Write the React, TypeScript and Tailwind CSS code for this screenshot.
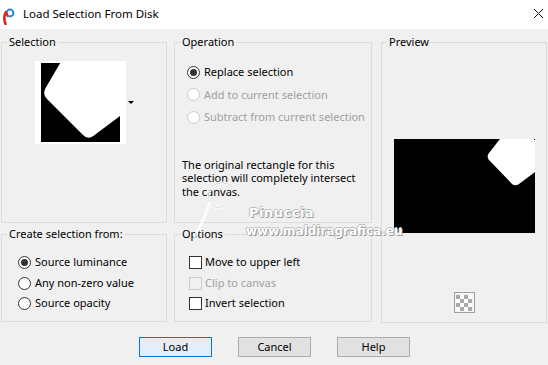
import type { ReactNode } from "react";

function Radio({ label, checked = false, disabled = false }: { label: string; checked?: boolean; disabled?: boolean }) {
  return (
    <div className="flex items-center gap-[4px] whitespace-nowrap">
      <span
        className={`flex items-center justify-center w-[13px] h-[13px] rounded-full border bg-white ${
          disabled ? "border-[#cccccc]" : "border-[#333333]"
        }`}
      >
        {checked && <span className="w-[7px] h-[7px] rounded-full bg-[#333333]" />}
      </span>
      <span className={disabled ? "text-[#a0a0a0]" : "text-black"}>{label}</span>
    </div>
  );
}

function Check({ label, disabled = false }: { label: string; disabled?: boolean }) {
  return (
    <div className="flex items-center gap-[3px] whitespace-nowrap">
      <span
        className={`w-[13px] h-[13px] border ${
          disabled ? "border-[#cccccc] bg-[#f0f0f0]" : "border-[#333333] bg-white"
        }`}
      />
      <span className={disabled ? "text-[#a0a0a0]" : "text-black"}>{label}</span>
    </div>
  );
}

function Group({ title, className = "", children }: { title: string; className?: string; children: ReactNode }) {
  return (
    <fieldset className={`border border-[#dcdcdc] ${className}`}>
      <legend className="ml-[5px] px-[2px] leading-[16px] whitespace-nowrap">{title}</legend>
      {children}
    </fieldset>
  );
}

export default function App() {
  return (
    <div className="relative w-[548px] h-[365px] overflow-hidden flex flex-col bg-[#f0f0f0] text-[11px] text-black font-['Noto_Sans','Liberation_Sans',sans-serif]">
      {/* Titelleiste */}
      <div className="h-[29px] bg-white flex items-center">
        <svg width={14} height={18} viewBox="0 0 14 18" className="ml-[2px] mt-[2px]" aria-hidden>
          <path d="M3.5 17 C2 13 2 8 4 5" stroke="#e2231a" strokeWidth={2.6} fill="none" strokeLinecap="round" />
          <circle cx={8} cy={6} r={3.4} stroke="#1e88e5" strokeWidth={2} fill="none" />
          <path d="M4 5 L5.5 9" stroke="#e2231a" strokeWidth={2} strokeLinecap="round" />
        </svg>
        <span className="ml-[7px] text-[11.5px] leading-[16px] mb-[2px]">Load Selection From Disk</span>
        <svg width={11} height={11} viewBox="0 0 11 11" className="ml-auto mr-[4px] mt-[-2px]" aria-hidden>
          <path d="M1 1 10 10M10 1 1 10" stroke="#111" strokeWidth={1} />
        </svg>
      </div>

      <div className="flex pt-[5px] pl-[1px]">
        {/* linke Spalte */}
        <div className="w-[166px] flex flex-col gap-[3px]">
          <Group title="Selection" className="h-[189px]">
            <div className="flex items-center pl-[33px] mt-[11px]">
              <div className="bg-white px-[6px] py-[2px]">
                <svg width={79} height={79} viewBox="0 0 79 79" className="block" aria-hidden>
                  <rect width={79} height={79} fill="#000" />
                  <path
                    d="M21 -3 L83 -3 L83 50 L52.6 72.8 Q47 77 42 72 L6 36 Q1 31 4.6 25 Z"
                    fill="#fff"
                  />
                </svg>
              </div>
              <span className="ml-[2px] w-0 h-0 border-l-[3px] border-r-[3px] border-t-[3px] border-l-transparent border-r-transparent border-t-black" />
            </div>
          </Group>
          <Group title="Create selection from:" className="h-[96px]">
            <div className="flex flex-col pl-[16px] pt-[10px]">
              <div className="h-[20.7px] flex items-center"><Radio label="Source luminance" checked /></div>
              <div className="h-[20.7px] flex items-center"><Radio label="Any non-zero value" /></div>
              <div className="h-[20.7px] flex items-center"><Radio label="Source opacity" /></div>
            </div>
          </Group>
        </div>

        {/* mittlere Spalte */}
        <div className="w-[198px] ml-[7px] flex flex-col gap-[3px]">
          <Group title="Operation" className="h-[189px]">
            <div className="flex flex-col pl-[12px] pt-[11px]">
              <div className="h-[22.5px] flex items-center"><Radio label="Replace selection" checked /></div>
              <div className="h-[22.5px] flex items-center"><Radio label="Add to current selection" disabled /></div>
              <div className="h-[22.5px] flex items-center"><Radio label="Subtract from current selection" disabled /></div>
            </div>
            <p className="pl-[7px] mt-[29px] leading-[13.5px] whitespace-nowrap">
              The original rectangle for this
              <br />
              selection will completely intersect
              <br />
              the canvas.
            </p>
          </Group>
          <Group title="Options" className="h-[96px]">
            <div className="flex flex-col pl-[14px] pt-[10px]">
              <div className="h-[20.7px] flex items-center"><Check label="Move to upper left" /></div>
              <div className="h-[20.7px] flex items-center"><Check label="Clip to canvas" disabled /></div>
              <div className="h-[20.7px] flex items-center"><Check label="Invert selection" /></div>
            </div>
          </Group>
        </div>

        {/* Vorschau */}
        <div className="w-[166px] ml-[9px]">
          <Group title="Preview" className="h-[289px]">
            <div className="flex flex-col items-center">
              <svg width={141} height={94} viewBox="0 0 141 94" className="block mt-[89px]" aria-hidden>
                <rect width={141} height={94} fill="#000" />
                <path
                  d="M107.5 -2 L143 -2 L143 31.5 L125 45 Q121 48 117.5 44.4 L95.5 21.6 Q92 18 95 14 Z"
                  fill="#fff"
                />
                <rect x={140} y={0} width={1} height={1} fill="#000" />
              </svg>
              <div className="mt-[59px] w-[21px] h-[21px] border border-[#a0a0a0] bg-[#f4f4f4] p-[1.5px]">
                <div className="grid grid-cols-4 w-[16px] h-[16px]">
                  {Array.from({ length: 16 }).map((_, i) => (
                    <span
                      key={i}
                      className={(Math.floor(i / 4) + i) % 2 === 0 ? "bg-[#a8a8a8]" : "bg-white"}
                    />
                  ))}
                </div>
              </div>
            </div>
          </Group>
        </div>
      </div>

      {/* Buttons */}
      <div className="flex justify-center gap-[26px] mt-[14px] pl-[1px]">
        <button className="w-[73px] h-[20px] border border-[#0078d7] bg-[#e5eef8] leading-[16px]">Load</button>
        <button className="w-[73px] h-[20px] border border-[#adadad] bg-[#e1e1e1] leading-[16px]">Cancel</button>
        <button className="w-[73px] h-[20px] border border-[#adadad] bg-[#e1e1e1] leading-[16px]">Help</button>
      </div>

      {/* Wasserzeichen */}
      <svg width={80} height={60} viewBox="0 0 80 60" className="absolute left-[190px] top-[180px] opacity-80" aria-hidden>
        <path d="M42 6 C30 -2 14 6 20 22 C24 32 40 26 38 18" stroke="#fff" strokeWidth={3} fill="none" />
        <path d="M42 6 C30 -2 14 6 20 22 C24 32 40 26 38 18" stroke="#c8c8c8" strokeWidth={0.8} fill="none" />
        <path d="M20 22 C16 36 10 46 4 58" stroke="#fff" strokeWidth={3} fill="none" />
      </svg>
      <div className="absolute left-[249px] top-[205px] text-[13px] font-bold leading-[15px] text-white [text-shadow:1px_1px_0_#999,-1px_0_0_#bbb,0_-1px_0_#bbb] tracking-[0.5px] font-['DejaVu_Sans',sans-serif]">
        Pinuccia
      </div>
      <div className="absolute left-[246px] top-[224px] text-[12px] font-bold leading-[14px] text-white [text-shadow:1px_1px_0_#999,-1px_0_0_#bbb,0_-1px_0_#bbb] font-['DejaVu_Sans',sans-serif]">
        www.maldiragrafica.eu
      </div>
    </div>
  );
}
